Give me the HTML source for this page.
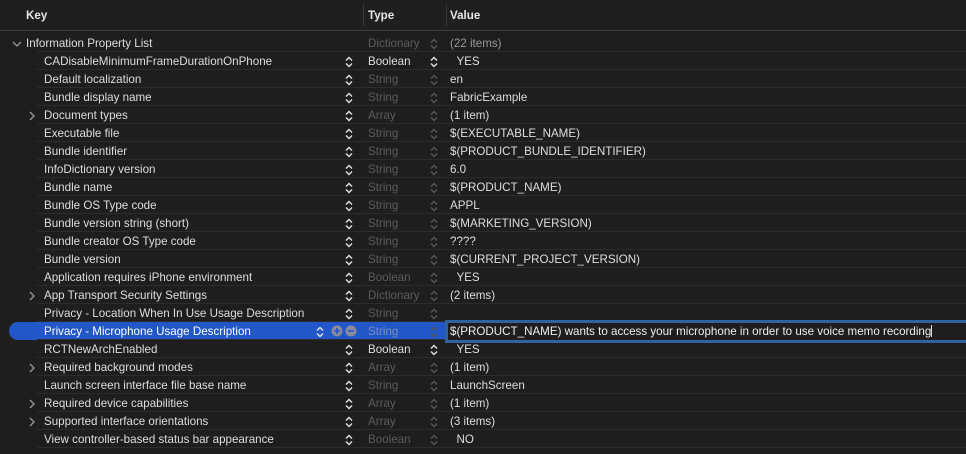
<!DOCTYPE html><html><head><style>
body{margin:0;width:966px;height:454px;background:#1e1e1e;font-family:"Liberation Sans",sans-serif;font-size:11.6px;color:#dedede;overflow:hidden;position:relative}
.a{position:absolute;white-space:nowrap}
.hd{position:absolute;left:0;top:0;width:966px;height:30px;border-bottom:1px solid #3a3a3a;background:#1f1f1f}
.r{position:absolute;left:37px;width:929px;height:18px;border-bottom:1px solid #2c2c2c;box-sizing:border-box}
.t{line-height:18px}
.dim{color:#5c5c5c}
.st{position:absolute;width:8px;height:12px}
</style></head><body>
<div class="hd"></div>
<div class="a" style="left:26px;top:9px;font-weight:bold;color:#e6e6e6">Key</div>
<div class="a" style="left:363px;top:4px;width:1px;height:22px;background:#3a3a3a"></div>
<div class="a" style="left:368px;top:9px;font-weight:bold;color:#e6e6e6">Type</div>
<div class="a" style="left:446px;top:4px;width:1px;height:22px;background:#3a3a3a"></div>
<div class="a" style="left:450px;top:9px;font-weight:bold;color:#e6e6e6">Value</div>
<div class="a" style="left:9px;top:322px;width:437px;height:18px;background:#2157c9;border-radius:9px 0 0 9px"></div>
<div id="rows"></div>
<div class="a" style="left:445px;top:320px;width:530px;height:17px;border:3px solid #2f629e;background:#1e1e1e;box-sizing:content-box"></div>
<div class="a t" style="left:450px;top:323px;color:#eee">$(PRODUCT_NAME) wants to access your microphone in order to use voice memo recording<span style="display:inline-block;width:1px;height:12px;background:#ddd;vertical-align:-2px"></span></div>
<svg class="a" style="left:331px;top:325px" width="26" height="12"><circle cx="6" cy="6" r="5.5" fill="#8a8a9a"/><path d="M3 6h6M6 3v6" stroke="#2157c9" stroke-width="1.6"/><circle cx="20" cy="6" r="5.5" fill="#8a8a9a"/><path d="M17 6h6" stroke="#2157c9" stroke-width="1.6"/></svg>
<script>
const R=[
[0,"Information Property List","Dictionary","(22 items)",1,1,1,0],
[1,"CADisableMinimumFrameDurationOnPhone","Boolean"," YES",0,0,0,1],
[1,"Default localization","String","en",0,0,1,1],
[1,"Bundle display name","String","FabricExample",0,0,1,1],
[1,"Document types","Array","(1 item)",2,1,1,1],
[1,"Executable file","String","$(EXECUTABLE_NAME)",0,0,1,1],
[1,"Bundle identifier","String","$(PRODUCT_BUNDLE_IDENTIFIER)",0,0,1,1],
[1,"InfoDictionary version","String","6.0",0,0,1,1],
[1,"Bundle name","String","$(PRODUCT_NAME)",0,0,1,1],
[1,"Bundle OS Type code","String","APPL",0,0,1,1],
[1,"Bundle version string (short)","String","$(MARKETING_VERSION)",0,0,1,1],
[1,"Bundle creator OS Type code","String","????",0,0,1,1],
[1,"Bundle version","String","$(CURRENT_PROJECT_VERSION)",0,0,1,1],
[1,"Application requires iPhone environment","Boolean"," YES",0,0,1,1],
[1,"App Transport Security Settings","Dictionary","(2 items)",2,1,1,1],
[1,"Privacy - Location When In Use Usage Description","String","",0,0,1,1],
[1,"Privacy - Microphone Usage Description","String","",0,0,1,1],
[1,"RCTNewArchEnabled","Boolean"," YES",0,0,0,1],
[1,"Required background modes","Array","(1 item)",2,1,1,1],
[1,"Launch screen interface file base name","String","LaunchScreen",0,0,1,1],
[1,"Required device capabilities","Array","(1 item)",2,1,1,1],
[1,"Supported interface orientations","Array","(3 items)",2,1,1,1],
[1,"View controller-based status bar appearance","Boolean"," NO",0,0,1,1]];
function stp(x,y,c){return `<svg class="st" style="left:${x}px;top:${y}px" viewBox="0 0 8 12"><path d="M1 4.5L4 1.5L7 4.5M1 7.5L4 10.5L7 7.5" fill="none" stroke="${c}" stroke-width="1.5"/></svg>`}
let h="";R.forEach((r,i)=>{const y=34+18*i;const sel=i==16;const ty=y+1;
h+=`<div class="r" style="top:${y}px"></div>`;
if(r[4]==1)h+=`<svg class="a" style="left:12px;top:${y+7}px" width="10" height="7"><path d="M1 1l4 4 4-4" fill="none" stroke="#999" stroke-width="1.3"/></svg>`;
if(r[4]==2)h+=`<svg class="a" style="left:29px;top:${y+5}px" width="7" height="10"><path d="M1 1l4 4-4 4" fill="none" stroke="#999" stroke-width="1.3"/></svg>`;
h+=`<div class="a t" style="left:${r[0]?44:26}px;top:${ty}px;${sel?'color:#fff':''}">${r[1]}</div>`;
if(i>0)h+=stp(sel?316:345,y+4,"#ddd");
const bright=r[2]=="Boolean"&&i!=13&&i!=22;
h+=`<div class="a t ${bright?'':'dim'}" style="left:368px;top:${ty}px;${sel?'color:#7d8fbf':''}">${r[2]}</div>`;
h+=stp(430,y+4,bright?"#ddd":"#555");
let v=r[3];if(v[0]==' ')v='&nbsp;&nbsp;'+v.slice(1);
h+=`<div class="a t" style="left:450px;top:${ty}px;${i==0?'color:#999':''}">${v}</div>`;
});
document.getElementById("rows").outerHTML=h;
</script>
</body></html>
